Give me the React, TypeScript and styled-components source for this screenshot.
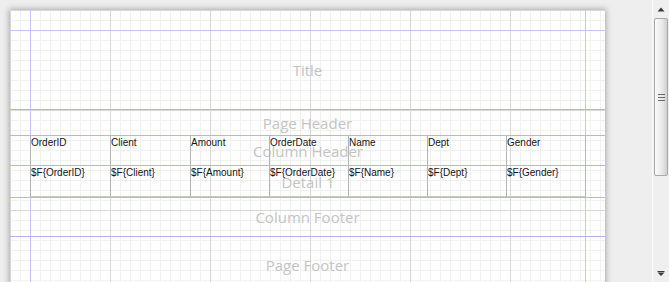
import React from "react";
import styled, { createGlobalStyle } from "styled-components";

const GlobalStyle = createGlobalStyle`
  html, body {
    margin: 0;
    padding: 0;
    height: 100%;
    overflow: hidden;
  }
  #root {
    height: 100%;
  }
`;

const Frame = styled.div`
  display: flex;
  height: 282px;
  width: 669px;
  background: #eeeeee;
`;

const Canvas = styled.div`
  flex: 1;
  overflow: hidden;
  padding: 10px 0 0 10px;
  background: #eeeeee;
`;

const Page = styled.div`
  width: 595px;
  background-color: #ffffff;
  box-shadow: 0 0 6px 1px rgba(0, 0, 0, 0.3);
  background-image:
    linear-gradient(to right, transparent 20px, #c6c6ff 20px, #c6c6ff 21px, transparent 21px),
    linear-gradient(to right, transparent 575px, #c6c6ff 575px, #c6c6ff 576px, transparent 576px),
    linear-gradient(to right, #d8d8d8 1px, transparent 1px),
    linear-gradient(to bottom, #d8d8d8 1px, transparent 1px),
    linear-gradient(to right, #f1f1f1 1px, transparent 1px),
    linear-gradient(to bottom, #f1f1f1 1px, transparent 1px);
  background-size:
    100% 100%,
    100% 100%,
    100px 100px,
    100px 100px,
    10px 10px,
    10px 10px;
  background-repeat: no-repeat, no-repeat, repeat, repeat, repeat, repeat;
  display: flex;
  flex-direction: column;
`;

const TopMargin = styled.div`
  height: 21px;
  box-sizing: border-box;
  border-bottom: 1px solid #c6c6ff;
`;

const Band = styled.div<{ $h: number }>`
  height: ${(p) => p.$h}px;
  box-sizing: border-box;
  border-bottom: 1px solid #b4b4e6;
  display: grid;
  grid-template-areas: "stack";
`;

const BandLabel = styled.div`
  grid-area: stack;
  align-self: center;
  justify-self: center;
  font-family: "Open Sans", "DejaVu Sans", sans-serif;
  font-size: 15px;
  line-height: 18px;
  color: #c4c4c4;
  white-space: nowrap;
`;

const FieldRow = styled.div`
  grid-area: stack;
  display: flex;
  padding: 0 20px;
  align-items: stretch;
`;

const Field = styled.div<{ $w: number; $bottom?: boolean }>`
  width: ${(p) => p.$w}px;
  box-sizing: border-box;
  border-left: 1px solid #b4b4b4;
  border-bottom: ${(p) => (p.$bottom ? "1px solid #c8c8c8" : "none")};
  font-family: "Liberation Sans", Arial, sans-serif;
  font-size: 10px;
  line-height: 12px;
  color: #151515;
  padding: 1px 0 0 0;
  white-space: nowrap;
  overflow: hidden;
  &:last-child {
    border-right: 1px solid #b4b4d8;
  }
`;

const Scrollbar = styled.div`
  width: 17px;
  box-sizing: border-box;
  border-left: 1px solid #fafafa;
  background: #efefef;
  display: flex;
  flex-direction: column;
  align-items: center;
`;

const ArrowButton = styled.div`
  height: 18px;
  width: 100%;
  display: flex;
  align-items: center;
  justify-content: center;
`;

const Thumb = styled.div`
  width: 14px;
  height: 158px;
  box-sizing: border-box;
  border: 1px solid #a8a8a8;
  border-radius: 2px;
  background: linear-gradient(to right, #fbfbfb, #e8e8e8 60%, #cfcfcf);
  display: flex;
  align-items: center;
  justify-content: center;
`;

const Track = styled.div`
  flex: 1;
`;

const Grip = styled.div`
  width: 7px;
  height: 7px;
  background: repeating-linear-gradient(
    to bottom,
    #6a6a6a 0px,
    #6a6a6a 1px,
    transparent 1px,
    transparent 3px
  );
`;

const columns = [
  { w: 80, name: "OrderID" },
  { w: 80, name: "Client" },
  { w: 79, name: "Amount" },
  { w: 79, name: "OrderDate" },
  { w: 79, name: "Name" },
  { w: 79, name: "Dept" },
  { w: 80, name: "Gender" },
];

const Triangle = ({ up }: { up?: boolean }) => (
  <svg width="8" height="5" viewBox="0 0 8 5">
    {up ? (
      <path d="M4 0.5 L7.5 4.5 L0.5 4.5 Z" fill="#3a3a3a" />
    ) : (
      <>
        <path d="M0.5 0.5 H7.5" stroke="#3a3a3a" strokeWidth="1" />
        <path d="M0.5 1.5 L7.5 1.5 L4 5 Z" fill="#3a3a3a" />
      </>
    )}
  </svg>
);

export default function App() {
  return (
    <>
      <GlobalStyle />
      <Frame>
        <Canvas>
          <Page>
            <TopMargin />
            <Band $h={79}>
              <BandLabel>Title</BandLabel>
            </Band>
            <Band $h={26}>
              <BandLabel>Page Header</BandLabel>
            </Band>
            <Band $h={30}>
              <BandLabel>Column Header</BandLabel>
              <FieldRow>
                {columns.map((c) => (
                  <Field key={c.name} $w={c.w}>
                    {c.name}
                  </Field>
                ))}
              </FieldRow>
            </Band>
            <Band $h={32}>
              <BandLabel>Detail 1</BandLabel>
              <FieldRow>
                {columns.map((c) => (
                  <Field key={c.name} $w={c.w} $bottom>
                    {"$F{" + c.name + "}"}
                  </Field>
                ))}
              </FieldRow>
            </Band>
            <Band $h={39}>
              <BandLabel>Column Footer</BandLabel>
            </Band>
            <Band $h={57}>
              <BandLabel>Page Footer</BandLabel>
            </Band>
          </Page>
        </Canvas>
        <Scrollbar>
          <ArrowButton>
            <Triangle up />
          </ArrowButton>
          <Thumb>
            <Grip />
          </Thumb>
          <Track />
          <ArrowButton>
            <Triangle />
          </ArrowButton>
        </Scrollbar>
      </Frame>
    </>
  );
}
